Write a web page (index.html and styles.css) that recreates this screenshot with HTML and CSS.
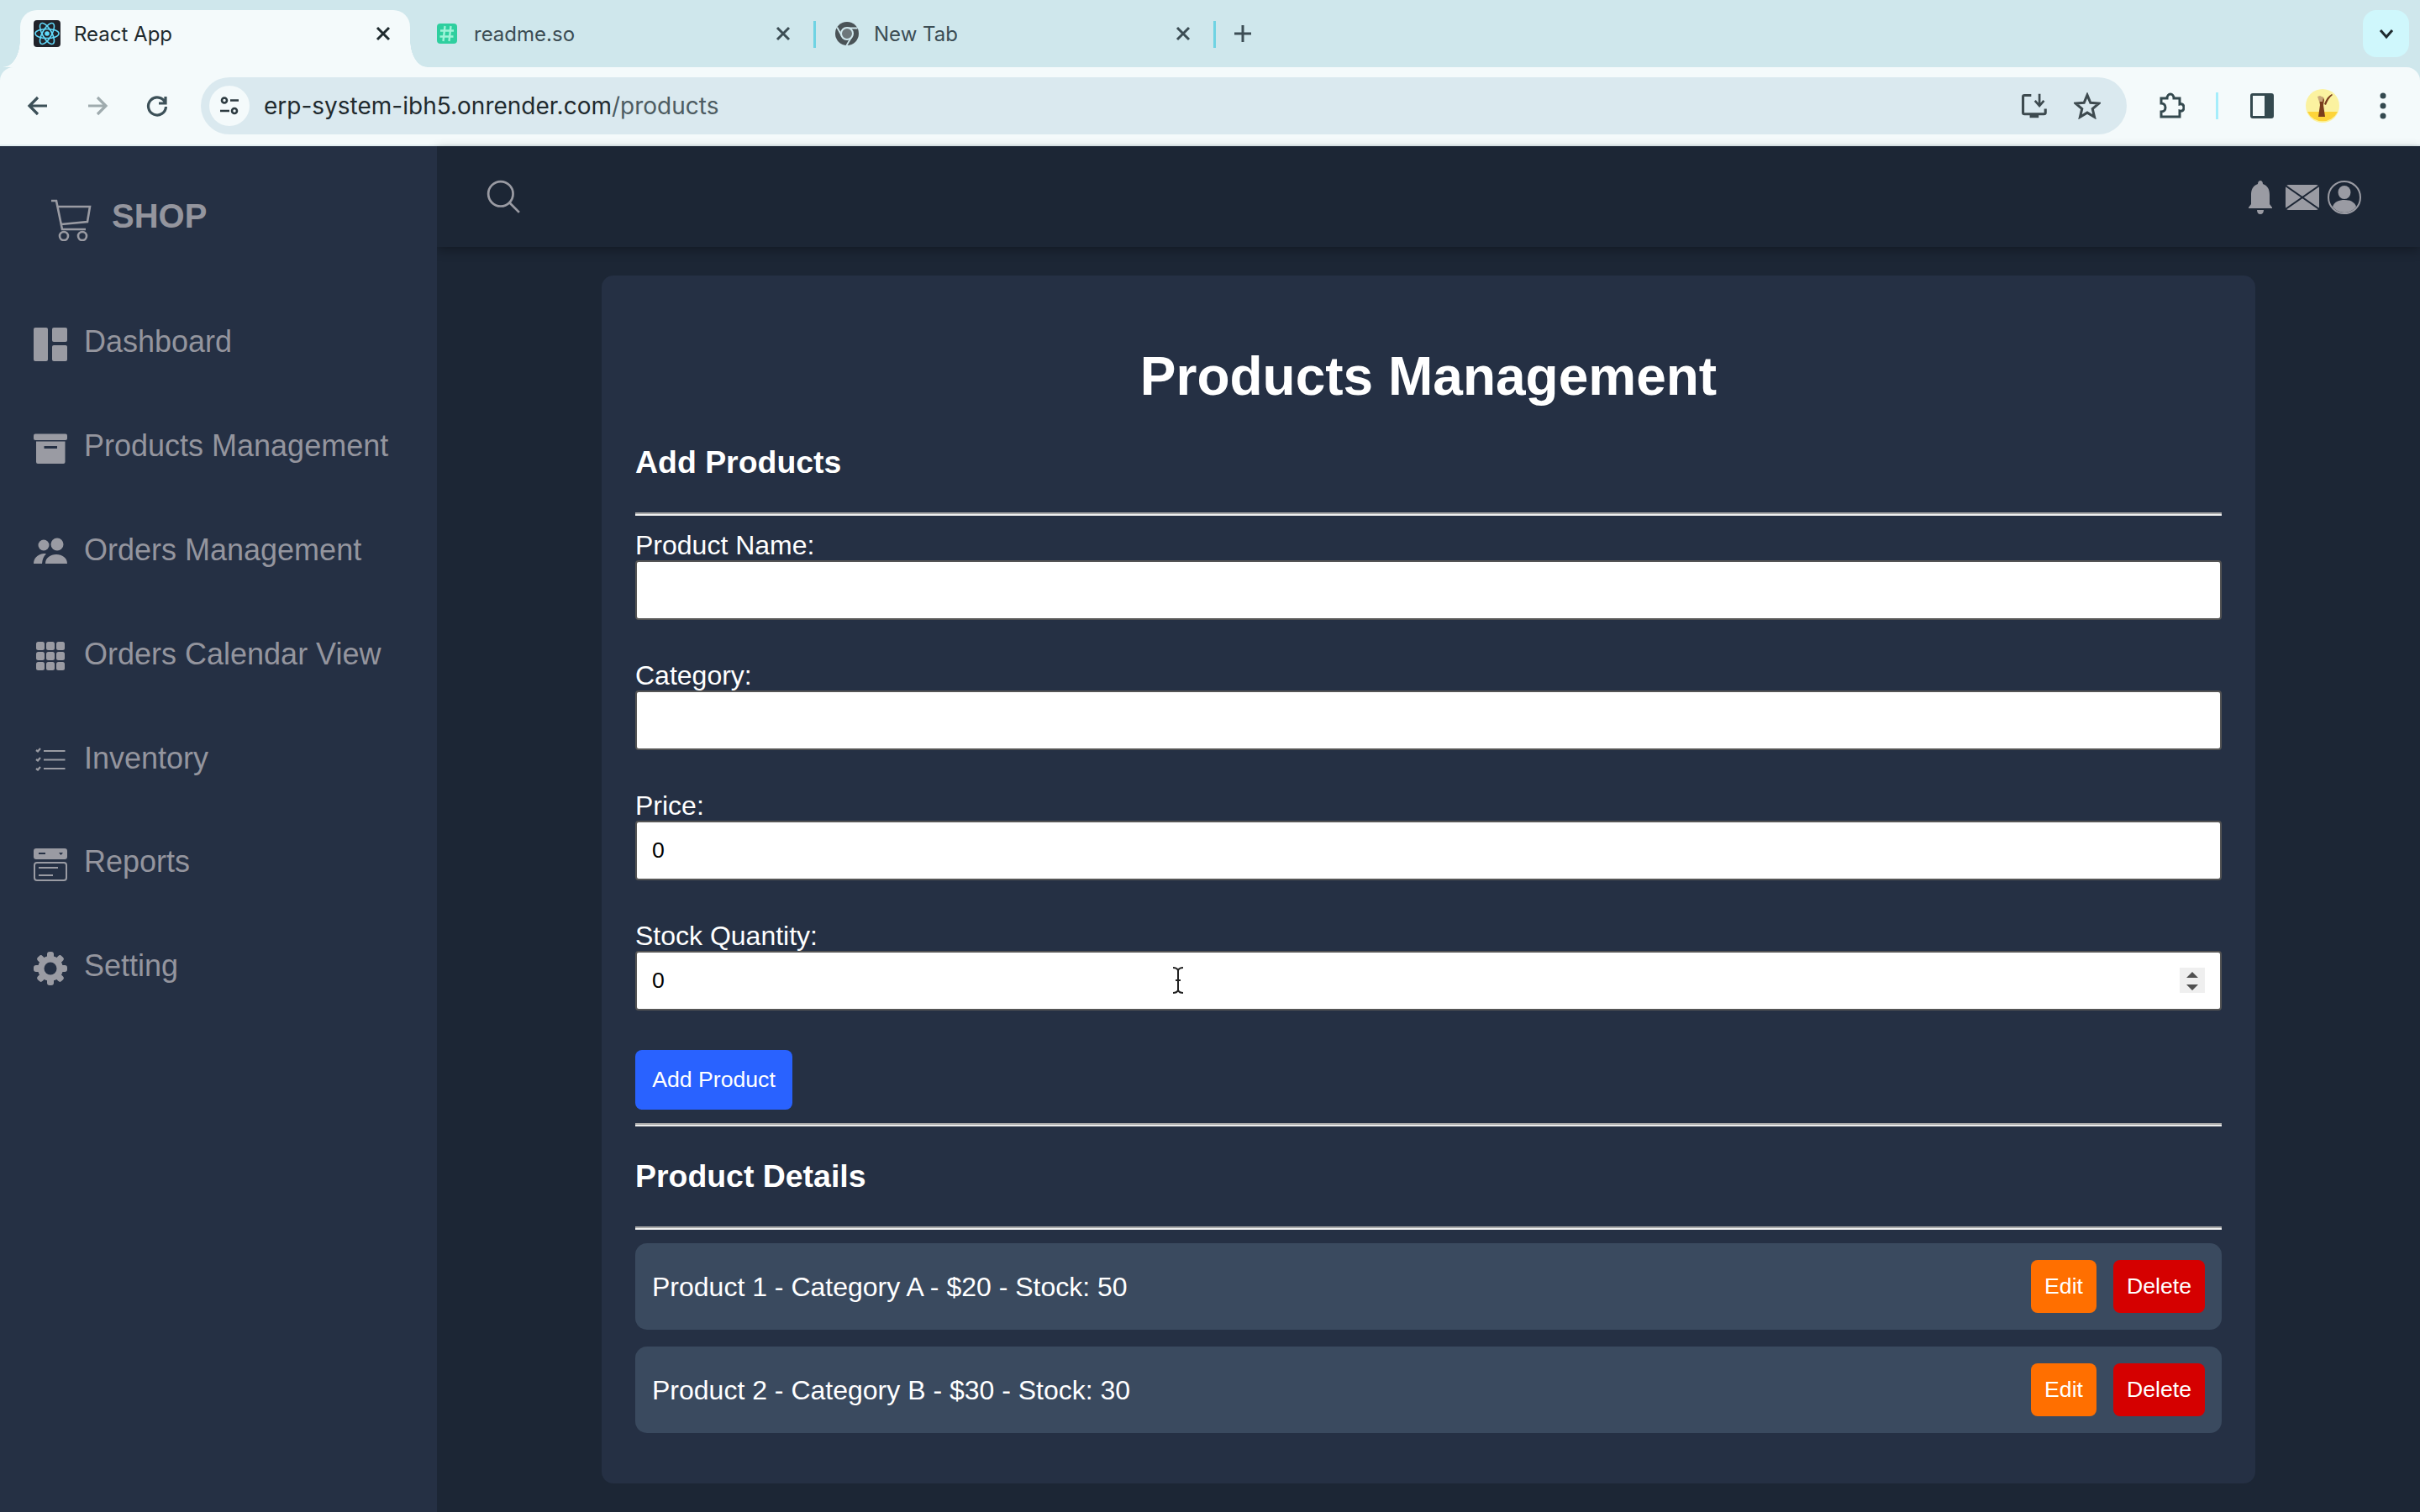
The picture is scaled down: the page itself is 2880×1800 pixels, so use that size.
FILE: index.html
```html
<!DOCTYPE html>
<html lang="en">
  <head>
    <meta charset="UTF-8" />
    <title>React App</title>
    <link rel="stylesheet" href="styles.css">
  </head>

  <body>
    <!-- browser chrome -->
    <div class="tabstrip">
      <div class="tab tab-active">
        <svg class="favicon" viewBox="0 0 32 32">
          <rect width="32" height="32" rx="4" fill="#20232a" />
          <g fill="none" stroke="#61dafb" stroke-width="1.6">
            <ellipse cx="16" cy="16" rx="14" ry="5.5" />
            <ellipse cx="16" cy="16" rx="14" ry="5.5" transform="rotate(60 16 16)" />
            <ellipse cx="16" cy="16" rx="14" ry="5.5" transform="rotate(120 16 16)" />
          </g>
          <circle cx="16" cy="16" r="2.8" fill="#61dafb" />
        </svg>
        <span class="tab-title">React App</span>
        <svg class="tab-close" viewBox="0 0 20 20"><path d="M3 3l14 14M17 3L3 17" /></svg>
      </div>
      <span class="tab-sep tab-sep-hidden"></span>
      <div class="tab">
        <svg class="favicon" viewBox="0 0 32 32">
          <rect x="4" y="4" width="24" height="24" rx="4" fill="#2fcf9f" />
          <path d="M13.500 7l-2 18M20.500 7l-2 18M8 12.500h16M7.500 19.500h16" stroke="#9ff3d8" stroke-width="2.400" />
        </svg>
        <span class="tab-title">readme.so</span>
        <svg class="tab-close" viewBox="0 0 20 20"><path d="M3 3l14 14M17 3L3 17" /></svg>
      </div>
      <span class="tab-sep"></span>
      <div class="tab">
        <svg class="favicon" viewBox="0 0 32 32">
          <circle cx="16" cy="16" r="14" fill="#4a5357" />
          <path d="M16 9.500h12.500M10.300 19.500L4.200 8.500M21.700 19.500L15.500 30" stroke="#cfe7ec" stroke-width="1.800" />
          <circle cx="16" cy="16" r="7" fill="#6d777b" stroke="#cfe7ec" stroke-width="2" />
        </svg>
        <span class="tab-title">New Tab</span>
        <svg class="tab-close" viewBox="0 0 20 20"><path d="M3 3l14 14M17 3L3 17" /></svg>
      </div>
      <span class="tab-sep"></span>
      <svg class="tab-new" viewBox="0 0 24 24"><path d="M12 2v20M2 12h20" /></svg>
      <div class="tab-search">
        <svg viewBox="0 0 20 20"><path d="M3 6l7 8 7-8" /></svg>
      </div>
    </div>

    <div class="toolbar">
      <svg class="nav-btn" viewBox="0 0 32 32"><path d="M27 16H7M16 6L6 16l10 10" /></svg>
      <svg class="nav-btn nav-btn-off" viewBox="0 0 32 32"><path d="M5 16h20M16 6l10 10-10 10" /></svg>
      <svg class="nav-btn" viewBox="0 0 32 32"><path d="M25.500 12A10.500 10.500 0 1 0 26.500 17M26 5v8h-8" /></svg>
      <div class="omnibox">
        <span class="site-info">
          <svg viewBox="0 0 28 28">
            <circle cx="8" cy="7.500" r="3" />
            <path d="M15 7.500h10M3 20h11" />
            <circle cx="20" cy="20" r="3" />
          </svg>
        </span>
        <span class="url">erp-system-ibh5.onrender.com<span class="url-path">/products</span></span>
        <svg class="omni-icon" viewBox="0 0 36 36">
          <path d="M15 4H6a2 2 0 0 0-2 2v21a2 2 0 0 0 2 2h26a2 2 0 0 0 2-2v-5" fill="none" stroke="#3d4a4f" stroke-width="3.500" />
          <path d="M13 29h12v5H13z" fill="#3d4a4f" />
          <path d="M26 2v14M20 11l6 7 6-7" fill="none" stroke="#3d4a4f" stroke-width="3" />
        </svg>
        <svg class="omni-icon omni-star" viewBox="0 0 36 36">
          <path d="M18 3.500l4.300 10.300 11.200.9-8.500 7.300 2.600 10.900L18 27.100l-9.600 5.800L11 22l-8.500-7.300 11.200-.9z" />
        </svg>
      </div>
      <div class="actions">
        <svg class="act-icon act-ext" viewBox="0 0 32 32">
          <path d="M4 7h7c0-3 2-5 4-5s4 2 4 5h7v7c3-1 5 1 5 4s-2 5-5 4v7H4v-6c3 0 5-2 5-5s-2-5-5-5z" />
        </svg>
        <span class="act-sep"></span>
        <svg class="act-icon act-panel" viewBox="0 0 32 32">
          <rect x="2" y="1" width="28" height="30" rx="3" />
          <rect x="5" y="4" width="14" height="24" class="panel-hole" />
        </svg>
        <svg class="act-avatar" viewBox="0 0 40 40">
          <circle cx="20" cy="20" r="20" fill="#fbf2a0" />
          <path d="M2 27h36a20 20 0 0 1-36 0z" fill="#fdd43a" />
          <path d="M16 12l1-3 4 1 1 3-1 6 2 14h-8l2-14z" fill="#7a3d1c" />
          <path d="M22 18c2-6 5-10 9-12l1 1c-4 3-6 7-8 12z" fill="#7a3d1c" />
          <path d="M14 9l3-1 4 2-1 5h-4z" fill="#c8a678" />
        </svg>
        <svg class="act-menu" viewBox="0 0 8 32">
          <circle cx="4" cy="4" r="3.500" />
          <circle cx="4" cy="16" r="3.500" />
          <circle cx="4" cy="28" r="3.500" />
        </svg>
      </div>
    </div>

    <div class="app">
      <aside class="sidebar">
        <div class="logo">
          <svg class="logo-cart" viewBox="0 0 49 50">
            <path d="M1 2h6l7 34h28M9 9h38l-3 18-31 3" />
            <circle cx="16" cy="44" r="5" />
            <circle cx="38" cy="44" r="5" />
          </svg>
          <span class="logo-text">SHOP</span>
        </div>
        <nav class="menu">
          <a class="menu-item">
            <svg viewBox="0 0 40 40">
              <rect x="0" y="0" width="17" height="40" rx="2" />
              <rect x="22" y="0" width="18" height="17" rx="2" />
              <rect x="22" y="21" width="18" height="19" rx="2" />
            </svg>
            <span class="menu-label">Dashboard</span>
          </a>
          <a class="menu-item">
            <svg viewBox="0 0 40 40">
              <rect x="0" y="2.500" width="40" height="7.500" rx="2" />
              <path d="M3 11.500h34.500V36a2 2 0 0 1-2 2H5a2 2 0 0 1-2-2zM12.500 17v3h15.500v-3z" fill-rule="evenodd" />
            </svg>
            <span class="menu-label">Products Management</span>
          </a>
          <a class="menu-item">
            <svg viewBox="0 0 40 40">
              <circle cx="12" cy="12" r="6.500" />
              <circle cx="28" cy="11" r="7.500" />
              <path d="M0 34c0-6 4-11 12-12 1 0 2 0 3 .5-3 2.500-4.500 6-5 11.500zM14 34c0-7 6-11 13-11s13 4 13 11z" />
            </svg>
            <span class="menu-label">Orders Management</span>
          </a>
          <a class="menu-item">
            <svg viewBox="0 0 40 40">
              <rect x="3" y="3" width="10" height="10" rx="2.500" />
              <rect x="15" y="3" width="10" height="10" rx="2.500" />
              <rect x="27" y="3" width="10" height="10" rx="2.500" />
              <rect x="3" y="15" width="10" height="10" rx="2.500" />
              <rect x="15" y="15" width="10" height="10" rx="2.500" />
              <rect x="27" y="15" width="10" height="10" rx="2.500" />
              <rect x="3" y="27" width="10" height="10" rx="2.500" />
              <rect x="15" y="27" width="10" height="10" rx="2.500" />
              <rect x="27" y="27" width="10" height="10" rx="2.500" />
            </svg>
            <span class="menu-label">Orders Calendar View</span>
          </a>
          <a class="menu-item">
            <svg class="icon-stroke" viewBox="0 0 40 40">
              <path d="M12 9h25.500M12 19.500h25.500M12 30h25.500" />
              <path d="M3 8l2 1.500L8 6M3 19l2 1.500 3-3.500M3 30l2 1.500 3-3.500" />
            </svg>
            <span class="menu-label">Inventory</span>
          </a>
          <a class="menu-item">
            <svg viewBox="0 0 40 40">
              <path d="M3 1h34a3 3 0 0 1 3 3v7a3 3 0 0 1-3 3H3a3 3 0 0 1-3-3V4a3 3 0 0 1 3-3zM6 6v2h8V6zM30 6l2.500 3L35 6z" fill-rule="evenodd" />
              <rect x="1" y="18" width="38" height="21" rx="3" fill="none" stroke="#9a9ba3" stroke-width="2" />
              <path d="M6 23h23v2H6zM6 32h17v2H6z" />
            </svg>
            <span class="menu-label">Reports</span>
          </a>
          <a class="menu-item">
            <svg viewBox="0 0 40 40">
              <g>
                <rect x="16" y="0" width="8" height="40" rx="3" />
                <rect x="16" y="0" width="8" height="40" rx="3" transform="rotate(45 20 20)" />
                <rect x="16" y="0" width="8" height="40" rx="3" transform="rotate(90 20 20)" />
                <rect x="16" y="0" width="8" height="40" rx="3" transform="rotate(135 20 20)" />
              </g>
              <circle cx="20" cy="20" r="15" />
              <circle cx="20" cy="20" r="7.500" fill="#253044" />
            </svg>
            <span class="menu-label">Setting</span>
          </a>
        </nav>
      </aside>

      <div class="main">
        <header class="topbar">
          <svg class="top-search" viewBox="0 0 40 40">
            <circle cx="17" cy="16" r="14" />
            <path d="M27 26l11 11" />
          </svg>
          <div class="top-icons">
            <svg viewBox="0 0 40 40">
              <path d="M20 0c1.500 0 3 1.500 3 4 6 2 8 7 8 13v11l3 4v1H6v-1l3-4V17c0-6 2-11 8-13 0-2.500 1.500-4 3-4zM16 35h8c0 3-1.500 5-4 5s-4-2-4-5z" />
            </svg>
            <svg viewBox="0 0 40 40">
              <rect x="0" y="5" width="40" height="30" rx="4" />
              <path d="M0 6l40 28M40 6L0 34" stroke="#1c2635" stroke-width="2" />
            </svg>
            <svg class="top-user" viewBox="0 0 40 40">
              <circle cx="20" cy="20" r="19" fill="none" stroke="#9a9ba3" stroke-width="2" />
              <ellipse cx="20" cy="14" rx="7.500" ry="8" />
              <path d="M6 31c2-6 8-8 14-8s12 2 14 8c-3 4-8 7-14 7S9 35 6 31z" />
            </svg>
          </div>
        </header>

        <main class="content">
          <section class="card">
            <h1 class="page-title">Products Management</h1>
            <h3 class="section-title">Add Products</h3>
            <hr class="rule" />
            <form class="product-form">
              <label class="field">Product Name:
                <input class="field-input" type="text" />
              </label>
              <label class="field">Category:
                <input class="field-input" type="text" />
              </label>
              <label class="field">Price:
                <input class="field-input" type="text" value="0" />
              </label>
              <label class="field field-hover">Stock Quantity:
                <input class="field-input" type="text" value="0" />
                <span class="spinner">
                  <svg viewBox="0 0 30 30"><path d="M15 5l7 7H8zM15 27l-7-7h14z" /></svg>
                </span>
                <svg class="ibeam" viewBox="0 0 14 32">
                  <path d="M1 1c3 0 5 1 6 3v24c-1 2-3 3-6 3M13 1c-3 0-5 1-6 3v24c1 2 3 3 6 3M4 16h6" />
                </svg>
              </label>
              <button class="btn btn-add" type="button">Add Product</button>
            </form>
            <hr class="rule rule-tight" />
            <h3 class="section-title">Product Details</h3>
            <hr class="rule" />
            <ul class="product-list">
              <li class="product-item">
                <span class="product-text">Product 1 - Category A - $20 - Stock: 50</span>
                <div class="product-actions">
                  <button class="btn btn-edit" type="button">Edit</button>
                  <button class="btn btn-delete" type="button">Delete</button>
                </div>
              </li>
              <li class="product-item">
                <span class="product-text">Product 2 - Category B - $30 - Stock: 30</span>
                <div class="product-actions">
                  <button class="btn btn-edit" type="button">Edit</button>
                  <button class="btn btn-delete" type="button">Delete</button>
                </div>
              </li>
            </ul>
          </section>
        </main>
      </div>
    </div>
  </body>
</html>
```

FILE: styles.css
```css
* {
  box-sizing: border-box;
}

body {
  margin: 0;
  height: 100vh;
  display: flex;
  flex-direction: column;
  overflow: hidden;
  font-family: "Liberation Sans", Arial, sans-serif;
  background-color: #cfe7ec;
}

/* browser chrome */
.tabstrip {
  display: flex;
  height: 80px;
  padding: 12px 13px 0 24px;
  background-color: #cfe7ec;
  font-family: Inter, "Liberation Sans", sans-serif;
  flex-shrink: 0;
}

.tab {
  position: relative;
  display: flex;
  align-items: center;
  width: 464px;
  height: 56px;
  padding: 0 22px 0 16px;
  color: #3c4d54;
  font-size: 24px;
}

.tab-active {
  height: 68px;
  padding-bottom: 12px;
  background-color: #f4fafb;
  border-radius: 20px 20px 0 0;
  color: #1f2a2e;
  z-index: 1;
}

.tab-active::before,
.tab-active::after {
  content: "";
  position: absolute;
  bottom: 0;
  width: 20px;
  height: 32px;
}

.tab-active::before {
  left: -20px;
  background: radial-gradient(ellipse 20px 32px at 0 0, transparent 98%, #f4fafb 100%);
}

.tab-active::after {
  right: -20px;
  background: radial-gradient(ellipse 20px 32px at 100% 0, transparent 98%, #f4fafb 100%);
}

.favicon {
  width: 32px;
  height: 32px;
  flex-shrink: 0;
}

.tab-title {
  flex: 1;
  margin-left: 16px;
}

.tab-close {
  width: 20px;
  height: 20px;
  fill: none;
  stroke: currentColor;
  stroke-width: 3;
}

.tab-sep {
  width: 3px;
  height: 32px;
  margin: 13px 5px 0 4px;
  background-color: #6fd3e3;
}

.tab-sep-hidden {
  background-color: transparent;
}

.tab-new {
  width: 24px;
  height: 24px;
  margin: 16px 0 0 15px;
  fill: none;
  stroke: #3c4d54;
  stroke-width: 3;
}

.tab-search {
  display: flex;
  align-items: center;
  justify-content: center;
  width: 55px;
  height: 56px;
  margin-left: auto;
  background-color: #cff7fc;
  border-radius: 16px;
}

.tab-search svg {
  width: 20px;
  height: 20px;
  fill: none;
  stroke: #1f2a2e;
  stroke-width: 3;
}

.toolbar {
  display: flex;
  align-items: center;
  height: 94px;
  padding: 0 40px 0 29px;
  background-color: #f4fafb;
  border-bottom: 2px solid #e3eef1;
  border-radius: 16px 16px 0 0;
  flex-shrink: 0;
}

.nav-btn {
  width: 32px;
  height: 32px;
  margin-right: 39px;
  fill: none;
  stroke: #3c5058;
  stroke-width: 3.2;
}

.nav-btn-off {
  stroke: #9fabae;
}

.omnibox {
  display: flex;
  align-items: center;
  flex: 1;
  height: 68px;
  margin-left: -3px;
  padding: 0 31px 0 10px;
  background-color: #dae9ef;
  border-radius: 34px;
}

.site-info {
  display: flex;
  align-items: center;
  justify-content: center;
  width: 48px;
  height: 48px;
  background-color: #f4fafb;
  border-radius: 50%;
}

.site-info svg {
  width: 28px;
  height: 28px;
  fill: none;
  stroke: #2c3a40;
  stroke-width: 2.600;
}

.url {
  flex: 1;
  margin-left: 17px;
  color: #1f2a2e;
  font-family: Inter, "Liberation Sans", sans-serif;
  font-size: 28px;
}

.url-path {
  color: #4d5c62;
}

.omni-icon {
  width: 32px;
  height: 32px;
  margin-left: 32px;
}

.omni-star {
  fill: none;
  stroke: #3d4a4f;
  stroke-width: 3.400;
}

.actions {
  display: flex;
  align-items: center;
  margin-left: 37px;
}

.act-icon {
  width: 32px;
  height: 32px;
}

.act-ext {
  fill: none;
  stroke: #34494f;
  stroke-width: 3;
}

.act-sep {
  width: 3px;
  height: 32px;
  margin: 0 36px 0 37px;
  background-color: #a5edfb;
}

.act-panel {
  fill: #34494f;
}

.panel-hole {
  fill: #f4fafb;
}

.act-avatar {
  width: 40px;
  height: 40px;
  margin-left: 36px;
}

.act-menu {
  width: 8px;
  height: 32px;
  margin-left: 48px;
  fill: #34494f;
}

/* app layout */
.app {
  display: flex;
  flex: 1;
  min-height: 0;
  background-color: #1c2635;
}

.sidebar {
  position: relative;
  z-index: 2;
  width: 520px;
  background-color: #253044;
  color: #94959e;
  flex-shrink: 0;
}

.logo {
  display: flex;
  align-items: center;
  height: 174px;
  padding: 0 0 0 60px;
}

.logo-cart {
  width: 49px;
  height: 50px;
  margin-top: 2px;
  fill: none;
  stroke: #9a9ba3;
  stroke-width: 2.600;
}

.logo-text {
  margin-left: 24px;
  padding-bottom: 7px;
  font-size: 40px;
  font-weight: bold;
}

.menu-item {
  display: flex;
  align-items: center;
  height: 123.800px;
  padding-left: 40px;
}

.menu-item svg {
  width: 40px;
  height: 40px;
  fill: #9a9ba3;
  flex-shrink: 0;
}

.menu-item .icon-stroke {
  fill: none;
  stroke: #9a9ba3;
  stroke-width: 2.200;
}

.menu-label {
  margin-left: 20px;
  padding-bottom: 5px;
  font-size: 36px;
}

.main {
  display: flex;
  flex-direction: column;
  flex: 1;
  min-width: 0;
}

.topbar {
  position: relative;
  z-index: 1;
  display: flex;
  align-items: center;
  justify-content: space-between;
  height: 120px;
  padding: 2px 70px 0 58px;
  background-color: #1c2635;
  box-shadow: 0 4px 12px rgba(0, 0, 0, 0.3);
  flex-shrink: 0;
}

.top-search {
  width: 42px;
  height: 42px;
  fill: none;
  stroke: #9a9ba3;
  stroke-width: 2.600;
}

.top-icons {
  display: flex;
  align-items: center;
  gap: 10px;
}

.top-icons svg {
  width: 40px;
  height: 40px;
  fill: #9a9ba3;
}

.content {
  flex: 1;
  padding: 34px 196px;
}

.card {
  padding: 40px;
  background-color: #253044;
  border-radius: 14px;
  color: #fff;
}

.page-title {
  margin: 43px 0 44px;
  font-size: 64px;
  line-height: 74px;
  text-align: center;
}

.section-title {
  margin: 0 0 38px;
  font-size: 37.440px;
  line-height: 43px;
}

.rule {
  margin: 0 0 16px;
  height: 4px;
  border: 0;
  border-top: 2px solid #a9a9a9;
  border-bottom: 2px solid #eee;
}

.rule-tight {
  margin-bottom: 38px;
}

.field {
  position: relative;
  display: block;
  margin-bottom: 47px;
  font-size: 32px;
  line-height: 38px;
}

.field-input {
  display: block;
  width: 100%;
  height: 71px;
  margin-top: -1px;
  padding: 0 18px;
  background-color: #fff;
  border: 2px solid #555;
  border-radius: 4px;
  color: #000;
  font-family: "Liberation Sans", Arial, sans-serif;
  font-size: 26.670px;
}

.spinner {
  position: absolute;
  right: 20px;
  bottom: 21px;
  width: 30px;
  height: 30px;
  background-color: #efefef;
}

.spinner svg {
  display: block;
  fill: #505050;
}

.ibeam {
  position: absolute;
  left: 639px;
  bottom: 20px;
  width: 14px;
  height: 32px;
  fill: none;
  stroke: #222;
  stroke-width: 2;
}

.btn {
  border: 0;
  border-radius: 8px;
  color: #fff;
  font-family: "Liberation Sans", Arial, sans-serif;
  font-size: 26.670px;
}

.btn-add {
  display: block;
  width: 187px;
  height: 71px;
  margin: 0 0 16px;
  background-color: #2962ff;
}

.product-list {
  margin: 0;
  padding: 0;
  list-style: none;
}

.product-item {
  display: flex;
  align-items: center;
  justify-content: space-between;
  height: 103px;
  margin-bottom: 20px;
  padding: 0 20px;
  background-color: #3a4a5f;
  border-radius: 14px;
  font-size: 32px;
}

.product-text {
  padding-top: 2px;
}

.product-actions {
  display: flex;
  gap: 20px;
}

.product-actions .btn {
  height: 63px;
}

.btn-edit {
  width: 78px;
  background-color: #ff6f00;
}

.btn-delete {
  width: 109px;
  background-color: #d50000;
}
```
